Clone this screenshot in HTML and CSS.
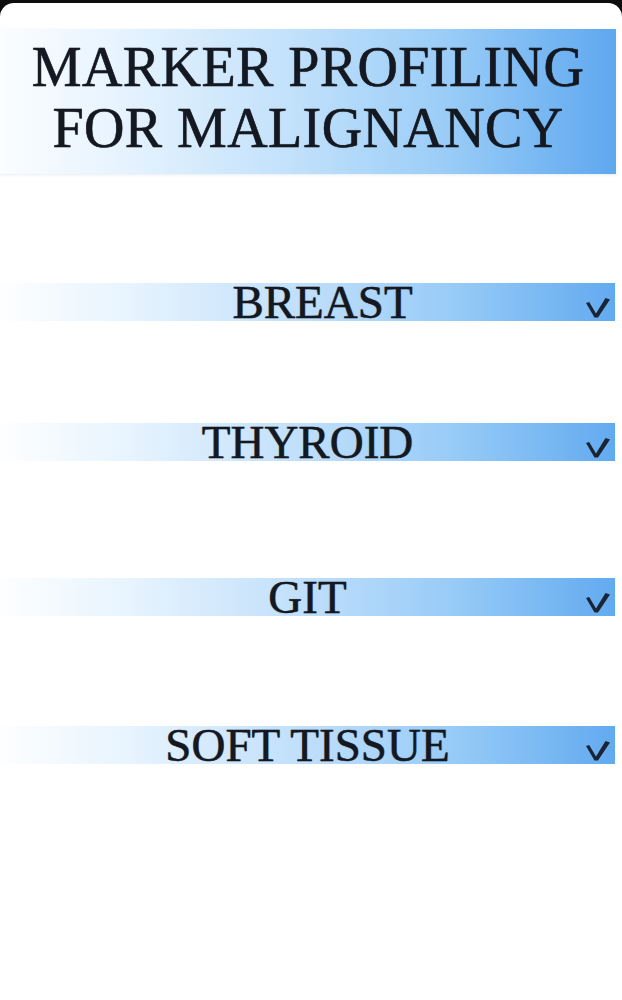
FILE: index.html
```html
<!DOCTYPE html>
<html lang="en">
<head>
<meta charset="utf-8">
<title>Marker Profiling for Malignancy</title>
<link rel="stylesheet" href="styles.css">
</head>
<body>
<div class="screen">
  <header class="title-bar">
    <h1 class="title">MARKER PROFILING<br>FOR MALIGNANCY</h1>
  </header>
  <ul class="menu">
    <li class="menu-item item-breast">
      <span class="label label-shift">BREAST</span>
      <svg class="chev" viewBox="0 0 24 20" width="24" height="20" aria-hidden="true"><polygon points="0,5 3.2,4 10,15.5 19.5,0 24,1.5 12,19.5 8.5,19.5" /></svg>
    </li>
    <li class="menu-item item-thyroid">
      <span class="label">THYROID</span>
      <svg class="chev" viewBox="0 0 24 20" width="24" height="20" aria-hidden="true"><polygon points="0,5 3.2,4 10,15.5 19.5,0 24,1.5 12,19.5 8.5,19.5" /></svg>
    </li>
    <li class="menu-item item-git">
      <span class="label">GIT</span>
      <svg class="chev" viewBox="0 0 24 20" width="24" height="20" aria-hidden="true"><polygon points="0,5 3.2,4 10,15.5 19.5,0 24,1.5 12,19.5 8.5,19.5" /></svg>
    </li>
    <li class="menu-item item-soft">
      <span class="label">SOFT TISSUE</span>
      <svg class="chev" viewBox="0 0 24 20" width="24" height="20" aria-hidden="true"><polygon points="0,5 3.2,4 10,15.5 19.5,0 24,1.5 12,19.5 8.5,19.5" /></svg>
    </li>
  </ul>
</div>
</body>
</html>
```

FILE: styles.css
```css
* { box-sizing: border-box; }

html, body {
  margin: 0;
  padding: 0;
  background: #0d0d0d;
}

.screen {
  margin-top: 3px;
  min-height: 997px;
  background: #ffffff;
  border-radius: 14px 14px 0 0;
  padding: 26px 6px 0 0;
  font-family: "Liberation Serif", "Times New Roman", serif;
  color: #141821;
}

.title-bar {
  height: 145px;
  padding-top: 8px;
  background: linear-gradient(to right, #fbfdff 0%, #e6f3fe 20%, #c4e2fb 46%, #9bcdf7 72%, #5ea8ef 100%);
  box-shadow: 0 1px 3px rgba(60, 100, 150, 0.12);
}

.title {
  margin: 0;
  text-align: center;
  font-size: 56px;
  line-height: 61px;
  font-weight: 400;
  letter-spacing: 0.4px;
  -webkit-text-stroke: 0.5px #141821;
  text-shadow: 0 0 1px rgba(20, 24, 33, 0.5);
}

.menu {
  list-style: none;
  margin: 0;
  padding: 0;
  display: flex;
  flex-direction: column;
}

.menu-item {
  height: 38px;
  display: grid;
  grid-template-columns: 1fr auto 1fr;
  align-items: center;
  margin-right: 1px;
  background: linear-gradient(to right, #fdfeff 0%, #e6f3fe 22%, #c2e0fb 48%, #97cbf7 74%, #62aaf0 100%);
}

.item-breast { margin-top: 109px; }
.item-thyroid { margin-top: 102px; }
.item-git { margin-top: 117px; }
.item-soft { margin-top: 110px; }

.label {
  grid-column: 2;
  font-size: 47px;
  line-height: 38px;
  white-space: nowrap;
  -webkit-text-stroke: 0.4px #141821;
  text-shadow: 0 0 1px rgba(20, 24, 33, 0.5);
}

.label-shift { padding-left: 30px; }

.chev {
  grid-column: 3;
  justify-self: end;
  align-self: end;
  margin: 0 5px 3px 0;
  fill: #1b2434;
}
```
